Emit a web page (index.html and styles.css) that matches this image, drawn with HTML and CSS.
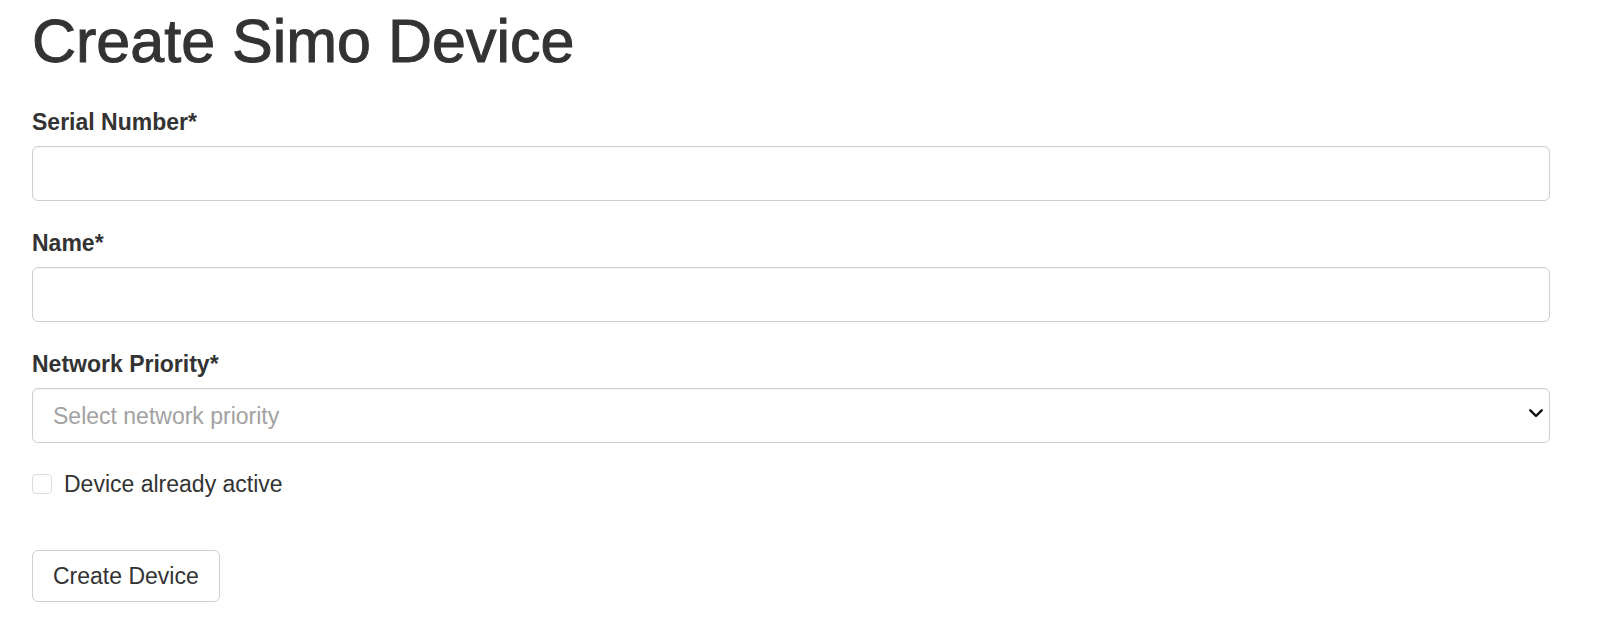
FILE: index.html
```html
<!DOCTYPE html>
<html lang="en">
<head>
<meta charset="utf-8">
<title>Create Simo Device</title>
<link rel="stylesheet" href="styles.css">
</head>
<body>
<main class="page">
  <h1 class="title">Create Simo Device</h1>
  <form class="form">
    <div class="field">
      <label class="label" for="serial">Serial Number*</label>
      <input class="control" id="serial" type="text">
    </div>
    <div class="field">
      <label class="label" for="name">Name*</label>
      <input class="control" id="name" type="text">
    </div>
    <div class="field">
      <label class="label" for="priority">Network Priority*</label>
      <div class="select-wrap">
        <select class="control select" id="priority">
          <option value="" disabled selected>Select network priority</option>
          <option>High</option>
          <option>Medium</option>
          <option>Low</option>
        </select>
        <svg class="chevron" width="14" height="9" viewBox="0 0 14 9" aria-hidden="true">
          <path d="M1.3 1.3 L7 7 L12.7 1.3" fill="none" stroke="#111" stroke-width="2.4" stroke-linecap="round" stroke-linejoin="round"/>
        </svg>
      </div>
    </div>
    <label class="check">
      <input class="check-box" type="checkbox">
      <span>Device already active</span>
    </label>
    <button class="btn" type="button">Create Device</button>
  </form>
</main>
</body>
</html>
```

FILE: styles.css
```css
* { box-sizing: border-box; }

html, body {
  margin: 0;
  padding: 0;
  background: #fff;
}

body {
  font-family: "Liberation Sans", Arial, Helvetica, sans-serif;
  color: #333;
  font-size: 23px;
  line-height: 28px;
}

.page {
  padding: 8px 0 0 32px;
  width: 1550px;
}

.title {
  margin: 0;
  font-size: 61px;
  line-height: 67px;
  font-weight: 400;
  color: #333;
  -webkit-text-stroke: 1px #333;
}

.form {
  display: flex;
  flex-direction: column;
  margin-top: 33px;
}

.field {
  display: flex;
  flex-direction: column;
  margin-bottom: 28px;
}

.label {
  font-weight: 700;
  font-size: 23px;
  line-height: 28px;
  color: #333;
  margin-bottom: 10px;
}

.control {
  display: block;
  width: 100%;
  height: 55px;
  border: 1px solid #cfcfcf;
  border-radius: 6px;
  background: #fff;
  font-family: inherit;
  font-size: 23px;
  color: #333;
  padding: 0 20px;
  outline: none;
  box-shadow: inset 0 1px 1px rgba(0, 0, 0, 0.04);
}

.select-wrap {
  position: relative;
}

.select {
  appearance: none;
  -webkit-appearance: none;
  color: #a2a2a2;
  padding-right: 50px;
}

.chevron {
  position: absolute;
  right: 7px;
  top: 21px;
  pointer-events: none;
}

.check {
  display: flex;
  align-items: center;
  gap: 12px;
  margin-top: -1px;
  font-size: 23px;
  line-height: 28px;
  color: #333;
}

.check-box {
  appearance: none;
  -webkit-appearance: none;
  margin: 0;
  width: 20px;
  height: 20px;
  border: 1px solid #dcdcdc;
  border-radius: 4px;
  background: #fff;
  flex: none;
}

.btn {
  align-self: flex-start;
  margin-top: 52px;
  height: 52px;
  padding: 0 20px;
  border: 1px solid #cfcfcf;
  border-radius: 6px;
  background: #fff;
  font-family: inherit;
  font-size: 23px;
  color: #333;
}
```
